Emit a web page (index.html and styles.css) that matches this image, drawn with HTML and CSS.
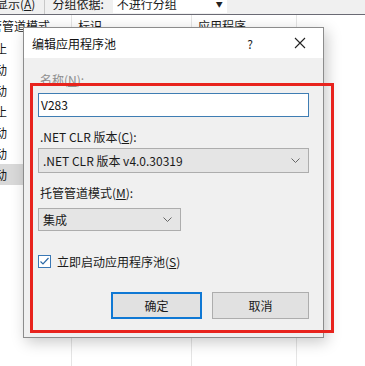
FILE: index.html
```html
<!DOCTYPE html>
<html>
<head>
<meta charset="utf-8">
<link rel="stylesheet" href="styles.css">
</head>
<body>
<div class="app">
  <div class="toolbar">
    <span class="tb-text tb-show">显示(<u>A</u>)</span>
    <span class="tb-sep"></span>
    <span class="tb-text">分组依据:</span>
    <div class="tb-combo"><span class="tb-value">不进行分组</span><span class="tb-arrow">▼</span></div>
  </div>
  <div class="list">
    <div class="list-head">
      <div class="col c1"><span class="head-clip">托管管道模式</span></div>
      <div class="col c2">标识</div>
      <div class="col c3">应用程序</div>
      <div class="col c4"></div>
    </div>
    <div class="list-body">
      <div class="col c1">
        <div class="row"><span class="row-clip">已停止</span></div>
        <div class="row"><span class="row-clip">已启动</span></div>
        <div class="row"><span class="row-clip">已启动</span></div>
        <div class="row"><span class="row-clip">已停止</span></div>
        <div class="row"><span class="row-clip">已启动</span></div>
        <div class="row"><span class="row-clip">已启动</span></div>
        <div class="row sel"><span class="row-clip">已启动</span></div>
      </div>
      <div class="col c2"></div>
      <div class="col c3"></div>
      <div class="col c4"></div>
    </div>
  </div>

  <div class="dialog">
    <div class="title">
      <span class="title-text">编辑应用程序池</span>
      <span class="help">?</span>
      <svg class="close" width="12" height="12" viewBox="0 0 12 12"><path d="M1 1 L11 11 M11 1 L1 11" stroke="#222" stroke-width="1.1" fill="none"/></svg>
    </div>
    <div class="body">
      <div class="label dim">名称(<u>N</u>):</div>
      <div class="input">V283</div>
      <div class="label">.NET CLR 版本(<u>C</u>):</div>
      <div class="select wide"><span>.NET CLR 版本 v4.0.30319</span>
        <svg class="chev" width="9" height="5" viewBox="0 0 9 5"><path d="M0.5 0.5 L4.5 4.5 L8.5 0.5" stroke="#666" stroke-width="1" fill="none"/></svg>
      </div>
      <div class="label">托管管道模式(<u>M</u>):</div>
      <div class="select narrow"><span>集成</span>
        <svg class="chev" width="9" height="5" viewBox="0 0 9 5"><path d="M0.5 0.5 L4.5 4.5 L8.5 0.5" stroke="#666" stroke-width="1" fill="none"/></svg>
      </div>
      <div class="check-row">
        <svg class="check" width="13" height="13" viewBox="0 0 13 13"><rect x="0.5" y="0.5" width="12" height="12" fill="#fff" stroke="#3a78b5"/><path d="M2.5 6.5 L5 9 L10.5 3" stroke="#2d6aa6" stroke-width="1.2" fill="none"/></svg>
        <span>立即启动应用程序池(<u>S</u>)</span>
      </div>
      <div class="buttons">
        <div class="btn ok">确定</div>
        <div class="btn cancel">取消</div>
      </div>
    </div>
  </div>
  <div class="annot"></div>
</div>
</body>
</html>
```

FILE: styles.css
```css
html, body {
  margin: 0;
  padding: 0;
}
body {
  width: 365px;
  height: 366px;
  overflow: hidden;
  background: #fff;
  font-family: "Noto Sans CJK SC", "Noto Sans", sans-serif;
  font-size: 12px;
  color: #1a1a1a;
}
.app {
  position: relative;
  width: 365px;
  height: 366px;
  overflow: hidden;
}
u { text-decoration: underline; text-underline-offset: 1px; }

/* toolbar */
.toolbar {
  height: 14px;
  background: #f0f0f0;
  border-bottom: 1px solid #6a6a74;
  display: flex;
  align-items: flex-start;
  overflow: hidden;
}
.tb-text {
  line-height: 16px;
  margin-top: -4px;
  white-space: nowrap;
}
.tb-show { margin-left: -4px; }
.tb-sep {
  width: 1px;
  height: 14px;
  background: #c8c8c8;
  margin: 0 7px 0 9px;
}
.tb-combo {
  margin-left: 9px;
  width: 114px;
  height: 13px;
  background: #fff;
  display: flex;
  justify-content: space-between;
  overflow: hidden;
}
.tb-value {
  line-height: 16px;
  margin-top: -4px;
  margin-left: 4px;
}
.tb-arrow {
  font-size: 7px;
  line-height: 9px;
  margin-right: 4px;
  color: #222;
}

/* list */
.list { display: flex; flex-direction: column; }
.list-head {
  display: flex;
  height: 23px;
  align-items: stretch;
}
.list-body {
  display: flex;
  height: 330px;
}
.col {
  border-right: 1px solid #e5e5e5;
  box-sizing: border-box;
  overflow: hidden;
  white-space: nowrap;
}
.c1 { width: 72px; }
.c2 { width: 120px; }
.c3 { width: 105px; }
.c4 { flex: 1; border-right: none; }
.list-head .col {
  line-height: 20px;
  padding-top: 1px;
  padding-left: 6px;
}
.list-head .c1 { padding-left: 0; }
.head-clip { margin-left: -22px; display: inline-block; }
.row {
  height: 21px;
  line-height: 21px;
  overflow: hidden;
}
.row-clip { display: inline-block; margin-left: -29px; }
.sel { background: #d9d9d9; }

/* dialog */
.dialog {
  position: absolute;
  left: 23px;
  top: 27px;
  width: 301px;
  height: 311px;
  box-sizing: border-box;
  border: 1px solid #8c8c8c;
  background: #f0f0f0;
  box-shadow: 3px 4px 14px rgba(0,0,0,0.22);
  display: flex;
  flex-direction: column;
}
.title {
  height: 30px;
  background: #fff;
  display: flex;
  align-items: center;
}
.title-text {
  margin-left: 8px;
  flex: 1;
  color: #111;
}
.help {
  width: 12px;
  text-align: center;
  margin-right: 38px;
  color: #222;
}
.close { margin-right: 17px; }
.body {
  padding: 0 14px;
  display: flex;
  flex-direction: column;
  align-items: flex-start;
}
.label {
  line-height: 16px;
  height: 16px;
  margin-left: 2px;
  margin-top: 12px;
  color: #1a1a1a;
}
.label.dim { margin-top: 14px; color: #8e8e8e; }
.input {
  margin-top: 5px;
  width: 271px;
  height: 24px;
  box-sizing: border-box;
  border: 1px solid #3f7db3;
  background: #fff;
  line-height: 22px;
  padding-left: 2px;
  color: #111;
}
.select {
  box-sizing: border-box;
  border: 1px solid #adadad;
  background: #e5e5e5;
  display: flex;
  align-items: center;
  justify-content: space-between;
  padding: 0 8px 0 4px;
}
.select.wide { width: 271px; height: 25px; margin-top: 3px; }
.select.narrow { width: 143px; height: 23px; margin-top: 7px; }
.check-row {
  margin-top: 22px;
  height: 16px;
  display: flex;
  align-items: center;
  gap: 6px;
}
.buttons {
  margin-top: 23px;
  align-self: stretch;
  display: flex;
  justify-content: flex-end;
  gap: 10px;
}
.btn {
  height: 27px;
  box-sizing: border-box;
  background: #e1e1e1;
  display: flex;
  align-items: center;
  justify-content: center;
}
.btn.ok { width: 91px; border: 2px solid #0f78d4; }
.btn.cancel { width: 97px; border: 1px solid #adadad; }

/* annotation */
.annot {
  position: absolute;
  left: 30px;
  top: 83px;
  width: 304px;
  height: 250px;
  box-sizing: border-box;
  border: 3px solid #e8231d;
}
```
